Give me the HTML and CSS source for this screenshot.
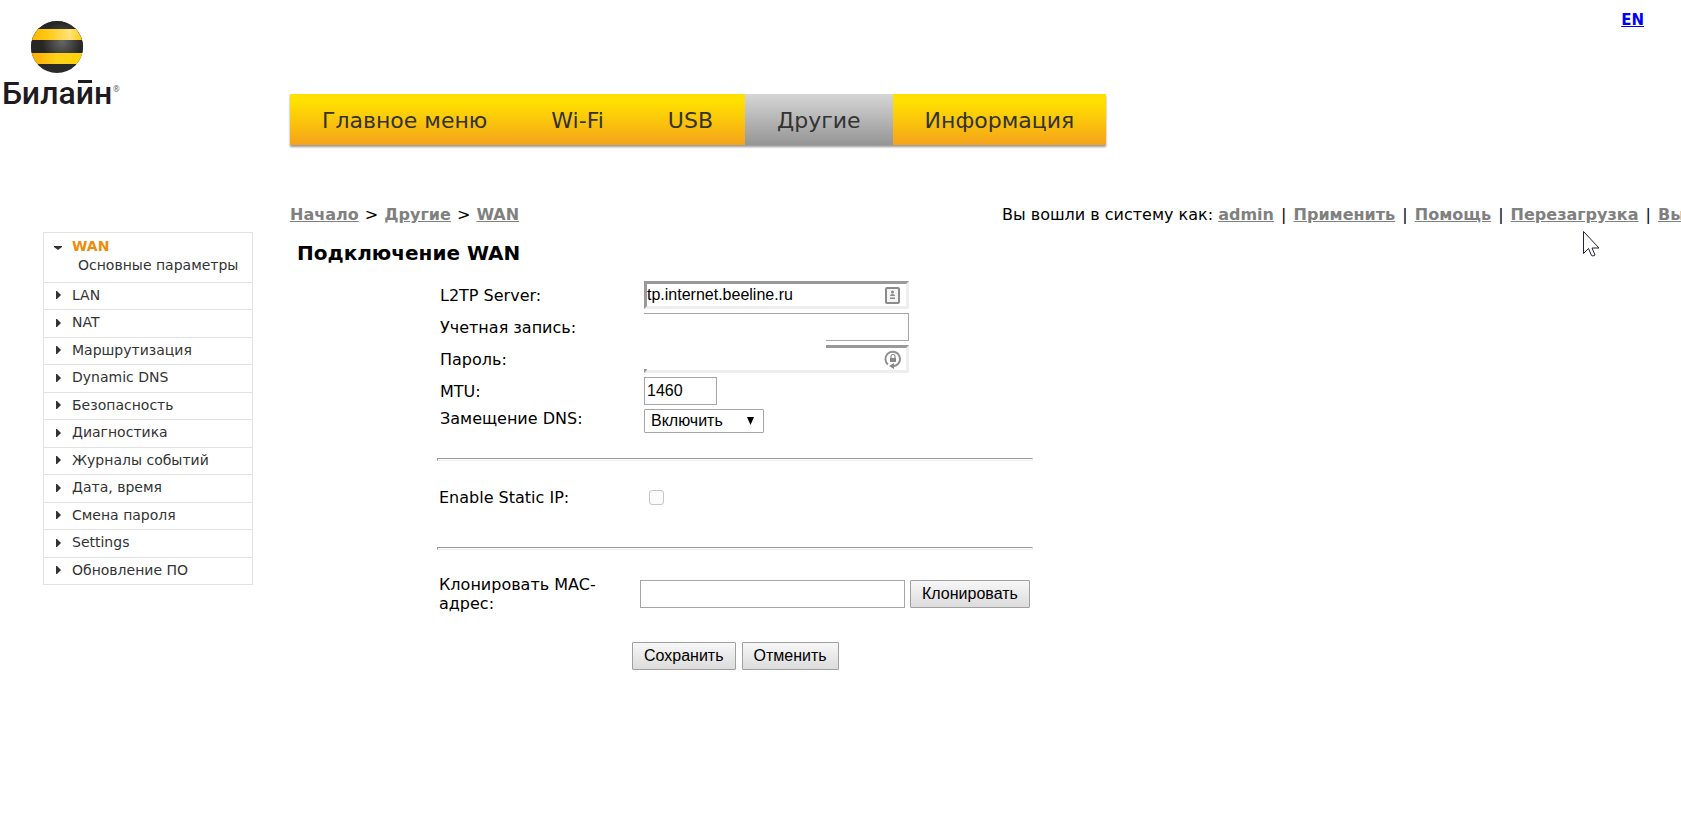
FILE: index.html
```html
<!DOCTYPE html>
<html lang="ru">
<head>
<meta charset="utf-8">
<title>Подключение WAN</title>
<link rel="stylesheet" href="styles.css">
</head>
<body>
<header class="top">
  <svg class="logo" viewBox="0 0 124 100" role="img" aria-label="Билайн">
    <defs>
      <clipPath id="ball"><circle cx="57" cy="31" r="26"/></clipPath>
      <radialGradient id="dark" cx="62" cy="26" r="20" gradientUnits="userSpaceOnUse"><stop offset="0" stop-color="#666"/><stop offset="1" stop-color="#262624"/></radialGradient>
      <linearGradient id="gold1"><stop offset="0" stop-color="#ffb400"/><stop offset="0.35" stop-color="#ffcc18"/><stop offset="0.75" stop-color="#ffe27a"/><stop offset="1" stop-color="#ffc800"/></linearGradient>
      <linearGradient id="gold2"><stop offset="0" stop-color="#ffa800"/><stop offset="0.5" stop-color="#ffd21c"/><stop offset="1" stop-color="#ffd200"/></linearGradient>
    </defs>
    <g clip-path="url(#ball)">
      <rect x="31" y="5" width="52" height="52" fill="#2a2a28"/>
      <rect x="31" y="5" width="52" height="32" fill="url(#dark)"/>
      <rect x="31" y="13" width="52" height="11" fill="url(#gold1)"/>
      <rect x="31" y="37" width="52" height="11" fill="url(#gold2)"/>
    </g>
    <text class="logo-name" x="2" y="88">Билайн</text>
    <rect x="75" y="60" width="20" height="10" fill="#fff"/>
    <rect x="78" y="64" width="14" height="3" fill="#1d1a20"/>
    <text class="logo-mark" x="113" y="76">®</text>
  </svg>
  <nav class="menu">
    <a href="#">Главное меню</a><a href="#">Wi-Fi</a><a href="#">USB</a><a href="#" class="current">Другие</a><a href="#">Информация</a>
  </nav>
  <a class="lang" href="#">EN</a>
</header>

<div class="page">
  <aside>
    <ul class="side">
      <li class="open"><svg class="tri" viewBox="0 0 8 10"><path d="M0 3h8v1L4 7 0 4z"/></svg><div><a href="#" class="active">WAN</a><a href="#" class="sub">Основные параметры</a></div></li>
      <li><svg class="tri" viewBox="0 0 8 10"><path d="M2 1h1l4 4-4 4H2z"/></svg><a href="#">LAN</a></li>
      <li><svg class="tri" viewBox="0 0 8 10"><path d="M2 1h1l4 4-4 4H2z"/></svg><a href="#">NAT</a></li>
      <li><svg class="tri" viewBox="0 0 8 10"><path d="M2 1h1l4 4-4 4H2z"/></svg><a href="#">Маршрутизация</a></li>
      <li><svg class="tri" viewBox="0 0 8 10"><path d="M2 1h1l4 4-4 4H2z"/></svg><a href="#">Dynamic DNS</a></li>
      <li><svg class="tri" viewBox="0 0 8 10"><path d="M2 1h1l4 4-4 4H2z"/></svg><a href="#">Безопасность</a></li>
      <li><svg class="tri" viewBox="0 0 8 10"><path d="M2 1h1l4 4-4 4H2z"/></svg><a href="#">Диагностика</a></li>
      <li><svg class="tri" viewBox="0 0 8 10"><path d="M2 1h1l4 4-4 4H2z"/></svg><a href="#">Журналы событий</a></li>
      <li><svg class="tri" viewBox="0 0 8 10"><path d="M2 1h1l4 4-4 4H2z"/></svg><a href="#">Дата, время</a></li>
      <li><svg class="tri" viewBox="0 0 8 10"><path d="M2 1h1l4 4-4 4H2z"/></svg><a href="#">Смена пароля</a></li>
      <li><svg class="tri" viewBox="0 0 8 10"><path d="M2 1h1l4 4-4 4H2z"/></svg><a href="#">Settings</a></li>
      <li><svg class="tri" viewBox="0 0 8 10"><path d="M2 1h1l4 4-4 4H2z"/></svg><a href="#">Обновление ПО</a></li>
    </ul>
  </aside>

  <main>
    <div class="bar">
      <div class="crumbs"><a href="#">Начало</a> <span class="gt">&gt;</span> <a href="#">Другие</a> <span class="gt">&gt;</span> <a href="#">WAN</a></div>
      <div class="user">Вы вошли в систему как: <a href="#">admin</a> <span class="sep">|</span> <a href="#">Применить</a> <span class="sep">|</span> <a href="#">Помощь</a> <span class="sep">|</span> <a href="#">Перезагрузка</a> <span class="sep">|</span> <a href="#">Выход</a></div>
    </div>
    <h1>Подключение WAN</h1>
    <form class="form">
      <div class="fields">
        <label for="server">L2TP Server:</label>
        <div class="field">
          <input id="server" class="inset" type="text" value="tp.internet.beeline.ru">
          <svg class="badge" viewBox="0 0 18 18"><rect x="2" y="2" width="13" height="15" rx="1" fill="#f4f4f4" stroke="#8b8b8b" stroke-width="2"/><circle cx="8.500" cy="6" r="1.500" fill="#888"/><path d="M6 10q0-2 2.500-2t2.500 2z M6 11.500h5v1.500H6z" fill="#888"/></svg>
        </div>
        <label for="account">Учетная запись:</label>
        <div class="field">
          <input id="account" type="text">
          <span class="cover"></span>
        </div>
        <label for="password">Пароль:</label>
        <div class="field">
          <input id="password" class="inset" type="password">
          <svg class="badge" viewBox="0 0 18 18"><path d="M4 14.500A7.300 7.300 0 1 1 14 14Q12 16 9 16" fill="none" stroke="#8f8f8f" stroke-width="2"/><path d="M5 16l5-3v6z" fill="#888"/><rect x="6" y="8" width="6" height="4" fill="#888"/><path d="M7 8V6.500a2 2 0 0 1 4 0V8" fill="none" stroke="#888" stroke-width="1.200"/></svg>
        </div>
        <label for="mtu">MTU:</label>
        <div class="field"><input id="mtu" class="short" type="text" value="1460"></div>
        <label class="high" for="dns">Замещение DNS:</label>
        <div class="field pick">
          <select id="dns"><option>Включить</option><option>Выключить</option></select>
          <svg class="arrow" viewBox="0 0 8 8"><path d="M1 0h7L4.500 8z"/></svg>
        </div>
      </div>
      <hr>
      <div class="row">
        <label for="static">Enable Static IP:</label>
        <input id="static" type="checkbox" disabled>
      </div>
      <hr>
      <div class="row clone">
        <label for="mac">Клонировать MAC-адрес:</label>
        <input id="mac" type="text">
        <button type="button">Клонировать</button>
      </div>
      <div class="actions">
        <button type="submit">Сохранить</button>
        <button type="reset">Отменить</button>
      </div>
    </form>
  </main>
</div>
<svg class="pointer" viewBox="0 0 17 26"><path d="M.5.5v22l5-5 3 7 1.500.5 2-1-3-7h7z" fill="#fff" stroke="#222233"/></svg>
</body>
</html>
```

FILE: styles.css
```css
* { box-sizing: border-box; }
body {
  margin: 0;
  overflow: hidden;
  font: 16px/19px Verdana, "DejaVu Sans", sans-serif;
  color: #000;
  background: #fff;
}
.top {
  display: grid;
  grid-template-columns: 290px max-content 1fr;
  height: 148px;
}
.logo { width: 124px; height: 100px; margin: 16px 0 0 0; }
.logo-name { font: 500 32px Roboto, sans-serif; fill: #1d1a20; }
.logo-mark { font: 8px "Noto Sans", sans-serif; fill: #666; }
.menu {
  display: flex;
  height: 51px;
  margin-top: 94px;
  background: linear-gradient(#ffe000 15%, #f5a31a);
  box-shadow: 0 2px 2px #999;
}
.menu a {
  padding: 0 32px;
  font-size: 22px;
  line-height: 54px;
  color: #333;
  text-decoration: none;
}
.menu .current { background: linear-gradient(#d6d6d6, #959595); }
.lang {
  justify-self: end;
  align-self: start;
  margin: 11px 37px 0 0;
  font-size: 15px;
  font-weight: bold;
  color: #00f;
}
.page {
  display: grid;
  grid-template-columns: 290px 1fr;
}
.side {
  list-style: none;
  width: 210px;
  margin: 84px 0 0 43px;
  padding: 0;
  border: 1px solid #e2e2e2;
  font-size: 14px;
}
.side li {
  display: flex;
  align-items: center;
  gap: 10px;
  height: 27px;
  padding: 0 0 2px 10px;
  border-top: 1px solid #e2e2e2;
}
.side li:nth-child(odd) { height: 28px; }
.side .open, .side .open:nth-child(odd) { height: 49px; align-items: flex-start; padding-top: 4px; border-top: 0; }
.side a { display: block; color: #333; text-decoration: none; white-space: nowrap; }
.side .active { color: #ee8c0c; font-weight: bold; }
.side .sub { margin-left: 6px; }
.tri { flex: none; width: 8px; height: 10px; fill: #333; }
.open .tri { margin-top: 6px; }
main { min-width: 0; }
.bar {
  display: grid;
  grid-template-columns: 712px 1fr;
  margin-top: 57px;
  white-space: nowrap;
}
.bar a { color: gray; font-weight: bold; }
.gt { margin: 0 1px; }
.sep { margin: 0 2px; }
h1 {
  margin: 17px 0 0 7px;
  font-size: 20px;
  line-height: 24px;
}
.form { width: 596px; margin: 16px 0 0 147px; }
.fields {
  display: grid;
  grid-template-columns: 204px 1fr;
  row-gap: 4px;
  padding-left: 3px;
  align-items: center;
}
.high { align-self: start; }
.field { position: relative; height: 28px; width: 265px; }
.pick { height: 24px; width: 120px; }
input, select, button { font: 16px "Liberation Sans", Arial, sans-serif; color: #000; }
input[type="text"], input[type="password"] {
  display: block;
  width: 265px;
  height: 28px;
  margin: 0;
  padding: 0 2px 1px;
  border: 1px solid #a5a5a5;
  border-radius: 0;
  background: #fff;
}
input.inset[type] { padding: 0; border: 3px solid; border-color: #999 #eee #eee #999; }
input.short[type] { width: 73px; }
.badge { position: absolute; right: 7px; top: 5px; width: 18px; height: 18px; overflow: visible; }
.cover { position: absolute; z-index: 1; left: 0; top: 1px; width: 182px; height: 55px; background: #fff; }
select {
  appearance: none;
  width: 120px;
  height: 24px;
  padding: 0 6px 1px;
  border: 1px solid #a5a5a5;
  border-radius: 1px;
  background: #fff;
}
.arrow { position: absolute; right: 10px; top: 8px; width: 8px; height: 8px; pointer-events: none; }
hr { height: 3px; margin: 25px 0 0; border: 1px solid; border-color: #999 #eee #eee #999; }
.row {
  display: grid;
  grid-template-columns: 201px 1fr;
  align-items: center;
  height: 61px;
  padding: 12px 0 0 2px;
}
.row input[type="checkbox"] {
  appearance: none;
  width: 15px;
  height: 15px;
  margin: 0 0 0 9px;
  border: 1px solid #c6c6c6;
  border-radius: 3px;
  background: #fbfbfb;
}
.clone { grid-template-columns: 201px 265px max-content; height: auto; padding-top: 25px; }
.clone label { width: 180px; }
.clone button { margin-left: 5px; }
button {
  height: 28px;
  padding: 0 11px 1px;
  border: 1px solid #a0a0a0;
  border-radius: 1px;
  background: linear-gradient(#f7f7f7, #dcdcdc);
}
.actions { display: flex; gap: 6px; margin: 29px 0 0 195px; }
.pointer { position: absolute; left: 1583px; top: 231px; width: 17px; height: 26px; }
```
